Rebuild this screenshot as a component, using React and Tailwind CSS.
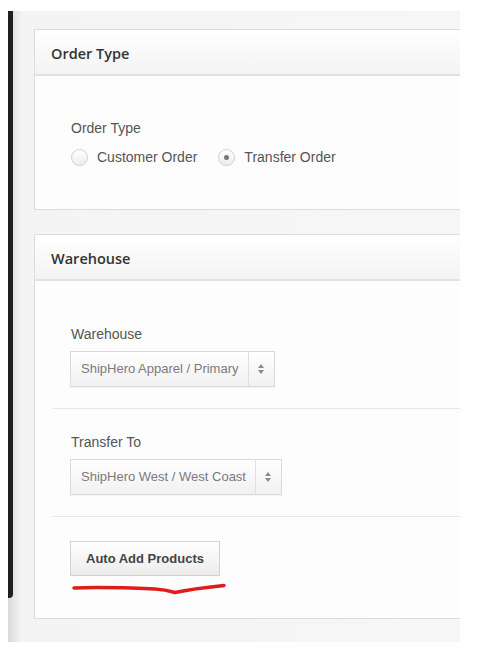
import React from 'react';

const sans = { fontFamily: '"Liberation Sans", Arial, sans-serif' };
const heading = { fontFamily: '"Open Sans", "Liberation Sans", sans-serif' };

const Panel = ({ title, children }) => (
  <div className="w-[440px] border border-[#dcdcdc] bg-[#fdfdfd]">
    <div className="h-[46px] flex items-center px-[16px] pt-[3px] bg-gradient-to-b from-[#ffffff] to-[#f3f3f3] border-b-2 border-[#e2e2e2]">
      <span style={heading} className="text-[14.5px] font-semibold text-[#333]">{title}</span>
    </div>
    {children}
  </div>
);

const Radio = ({ checked, label }) => (
  <label className="flex items-center gap-[9px]">
    <span className="w-[17px] h-[17px] rounded-full border border-[#d0d0d0] bg-gradient-to-b from-[#ffffff] to-[#ededed] flex items-center justify-center">
      {checked && <span className="w-[5px] h-[5px] rounded-full bg-[#777]" />}
    </span>
    <span className="text-[14px] text-[#555]">{label}</span>
  </label>
);

const Select = ({ value }) => (
  <div className="inline-flex h-[36px] border border-[#dadada] bg-gradient-to-b from-[#ffffff] to-[#f1f1f1] shadow-[0_1px_1px_rgba(0,0,0,0.04)]">
    <div className="flex items-center pl-[10px] pr-[9px] text-[13px] text-[#7a7a80]">{value}</div>
    <div className="w-[26px] border-l border-[#e0e0e0] flex flex-col items-center justify-center gap-[2px]">
      <svg width="6" height="4" viewBox="0 0 6 4"><path d="M0 4 L3 0 L6 4 Z" fill="#8a8a8a" /></svg>
      <svg width="6" height="4" viewBox="0 0 6 4"><path d="M0 0 L3 4 L6 0 Z" fill="#8a8a8a" /></svg>
    </div>
  </div>
);

export default function App() {
  return (
    <div style={sans} className="w-[482px] h-[653px] bg-white pt-[11px] pl-[8px] overflow-hidden">
      <div className="w-[452px] h-[631px] flex overflow-hidden bg-[#f6f6f6] bg-gradient-to-r from-[#d9d9d9] via-[#f4f4f4] via-[3%] to-[#f6f6f6]">
        {/* dark frame edge on the left */}
        <div className="w-[5px] h-[587px] bg-[#1f2022] rounded-br-[4px] shrink-0" />

        <div className="pl-[21px] pt-[18px] flex flex-col gap-[24px]">
          <Panel title="Order Type">
            <div className="pl-[17px] pt-[43px] pb-[43px]">
              <div className="pl-[19px]">
                <div className="text-[14px] leading-[18px] text-[#555]">Order Type</div>
                <div className="mt-[11px] flex items-center gap-[21px] h-[18px]">
                  <Radio label="Customer Order" />
                  <Radio checked label="Transfer Order" />
                </div>
              </div>
            </div>
          </Panel>

          <Panel title="Warehouse">
            <div className="pl-[17px] pt-[19px] pb-[22px]">
              <div className="pl-[18px] pt-[25px] pb-[21px] border-b border-[#e8e8e8]">
                <div className="pl-[1px] text-[14px] leading-[18px] text-[#555]">Warehouse</div>
                <div className="mt-[8px]">
                  <Select value="ShipHero Apparel / Primary" />
                </div>
              </div>
              <div className="pl-[18px] pt-[24px] pb-[21px] border-b border-[#e8e8e8]">
                <div className="pl-[1px] text-[14px] leading-[18px] text-[#555]">Transfer To</div>
                <div className="mt-[8px]">
                  <Select value="ShipHero West / West Coast" />
                </div>
              </div>
              <div className="pl-[18px] pt-[24px]">
                <button className="h-[35px] px-[15px] border border-[#d2d2d2] bg-gradient-to-b from-[#ffffff] to-[#ececec] text-[13px] font-bold text-[#444]">
                  Auto Add Products
                </button>
                <svg className="block mt-[4px]" width="170" height="16" viewBox="0 0 170 16">
                  <path
                    d="M4 8 C 30 7, 60 8, 85 9 C 95 9.5, 100 11, 105 12.5 C 112 11, 125 8.5, 154 5.5"
                    fill="none"
                    stroke="#e01b1b"
                    strokeWidth="3.5"
                    strokeLinecap="round"
                  />
                </svg>
              </div>
            </div>
          </Panel>
        </div>
      </div>
    </div>
  );
}
